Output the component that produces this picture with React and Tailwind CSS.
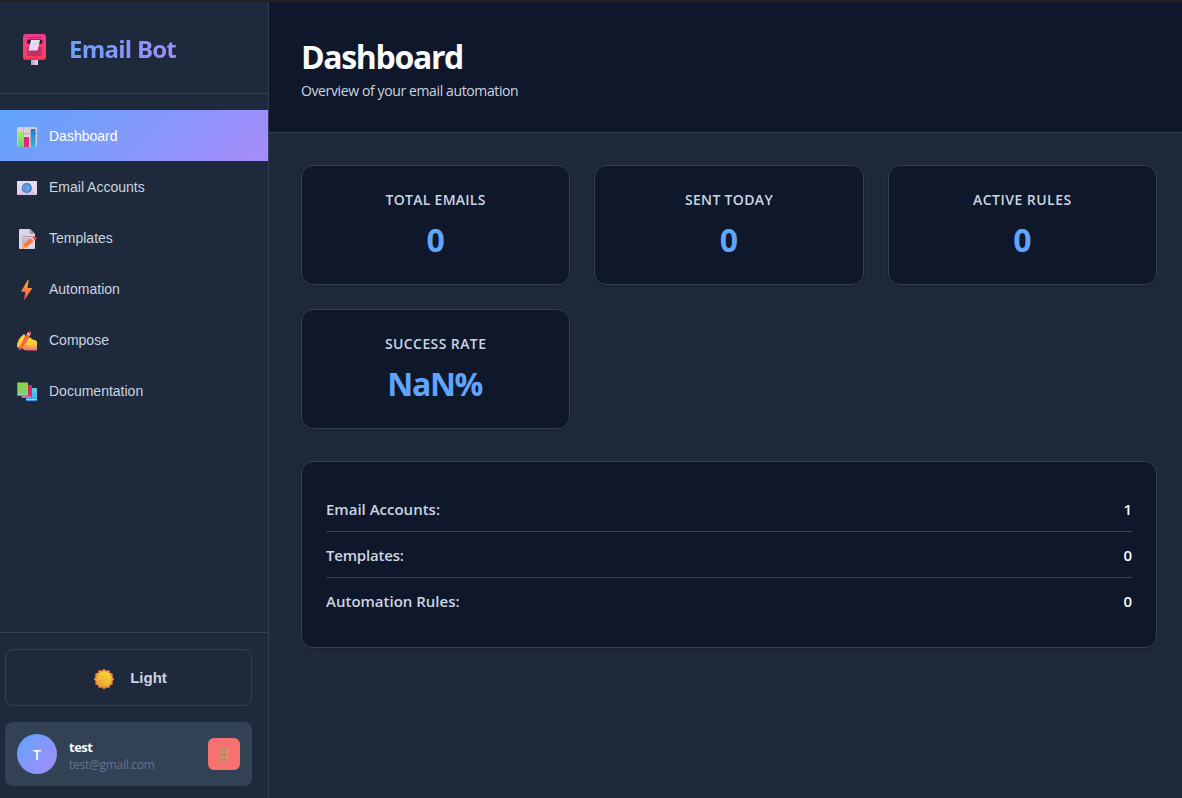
import React from 'react';

const stroke = 'border-[#334155]';

function Postbox() {
  return (
    <svg width="32" height="32" viewBox="0 0 32 32">
      <defs>
        <linearGradient id="pb" x1="0" y1="0" x2="0" y2="1">
          <stop offset="0" stopColor="#ee3d8f" />
          <stop offset="1" stopColor="#fd3f54" />
        </linearGradient>
        <linearGradient id="pbLeg" x1="0" x2="1">
          <stop offset="0" stopColor="#b79fc4" />
          <stop offset="1" stopColor="#e0d8ea" />
        </linearGradient>
      </defs>
      <rect x="12" y="25" width="7" height="7" fill="url(#pbLeg)" />
      <rect x="4" y="1" width="23" height="26" rx="3" fill="url(#pb)" />
      <rect x="5" y="25" width="21" height="2" rx="1" fill="#e93257" />
      <rect x="8" y="4" width="15" height="1" rx=".5" fill="#bd2b6d" />
      <rect x="8" y="14" width="14.500" height="9" rx="1" fill="#bf2f68" />
      <rect x="8" y="6.500" width="15.500" height="4.500" rx="2.200" fill="#36173d" />
      <path d="M12 7h9l-2.500 10.500H9.500Z" fill="#e7dfed" />
      <path d="m14 10 2 3-3 2M17 9l-1 4" stroke="#cfc4da" fill="none" strokeWidth=".8" />
    </svg>
  );
}

function Chart() {
  return (
    <svg width="20" height="20" viewBox="0 0 20 20">
      <defs>
        <linearGradient id="cg" x1="0" y1="0" x2="0" y2="1"><stop stopColor="#b0ec55" /><stop offset="1" stopColor="#62cc90" /></linearGradient>
        <linearGradient id="cb" x1="0" y1="0" x2="0" y2="1"><stop stopColor="#1f78ca" /><stop offset="1" stopColor="#34b3ee" /></linearGradient>
      </defs>
      <rect width="20" height="20" rx="2" fill="#d8cede" />
      <path d="M0 6.500h20M0 13h20M6.500 0v20M13.500 0v20" stroke="#b5abbd" strokeWidth=".8" />
      <rect x="1" y="4.500" width="5" height="15.500" rx=".7" fill="url(#cg)" />
      <rect x="7" y="10" width="5" height="10" rx=".7" fill="#df2b70" />
      <rect x="14" y="2" width="4.500" height="18" rx=".7" fill="url(#cb)" />
    </svg>
  );
}

function Mail() {
  return (
    <svg width="20" height="20" viewBox="0 0 20 20">
      <rect y="3" width="20" height="14" rx=".7" fill="#e4d9ec" />
      <path d="M0 17 7 9h6l7 8Z" fill="#d4c1e0" />
      <path d="m0 3.500 10 8 10-8" fill="none" stroke="#f4eff8" strokeWidth=".8" />
      <circle cx="9.800" cy="10" r="5.100" fill="#377bce" />
      <circle cx="9.700" cy="10" r="1.500" fill="none" stroke="#b9d1f2" strokeWidth=".8" />
      <path d="M11.300 8.500v2.200c0 1.500 2 1 1.700-1-.3-2.100-1.800-3-3.500-2.900-4 .3-4 6.200-.2 6.500 1 .1 1.800-.2 2.500-.6" fill="none" stroke="#a9c8f0" strokeWidth=".7" />
    </svg>
  );
}

function Memo() {
  return (
    <svg width="20" height="20" viewBox="0 0 20 20">
      <path d="M2 1q0-1 1-1h10l5 5v14q0 1-1 1H3q-1 0-1-1Z" fill="#dcd4e2" />
      <path d="M12.500 0v4q0 1 1 1H18Z" fill="#a79caf" />
      <path d="M5 7.500h10M5 9.800h9M5 12h7M5 14.300h5" stroke="#9e94aa" strokeWidth=".9" />
      <path d="m5 19.800 1.200-4.300 8.300-7 3 3.100-8.500 7.200Z" fill="#fa7833" />
      <path d="m5 19.800 1.200-4.300L9 18.800Z" fill="#ffab67" />
      <path d="m13.700 9.200 1-.9 3 3.100-1 .9Z" fill="#e5dceb" />
      <path d="m15 8.100 1.200-.8c1.500-.7 3.900 1.300 3.200 2.600l-1.400 1.400Z" fill="#f14a4c" />
    </svg>
  );
}

function Bolt() {
  return (
    <svg width="20" height="20" viewBox="0 0 20 20">
      <defs><linearGradient id="bo" x1="0" y1="0" x2="0" y2="1"><stop stopColor="#ffb443" /><stop offset=".5" stopColor="#fb843c" /><stop offset="1" stopColor="#ee3e57" /></linearGradient></defs>
      <path d="M10.800 0 4.300 11q-.3.700.4.700h3.600L7 19.500q0 .8.600.2L15.200 8.600q.2-.7-.5-.7h-4.200L11.600.6Q11.700-.3 10.800 0Z" fill="url(#bo)" />
    </svg>
  );
}

function Writing() {
  return (
    <svg width="20" height="20" viewBox="0 0 20 20">
      <defs><linearGradient id="wh" x1="0" y1="0" x2="0" y2="1"><stop stopColor="#ffd83d" /><stop offset=".65" stopColor="#fbc53e" /><stop offset="1" stopColor="#ec6589" /></linearGradient></defs>
      <path d="M1 11c0-2 3-5.500 5.200-7.200C8 2.700 9 5 7.700 6.600L6.500 9l6-2.400c1.600-.5 2.200.5 1.600 1.200 2.400 1 4 1.800 5.900 2.200v9.500H9.500c-2 0-3.500-.6-3.300-1.900L1 17c-1.500-1-1.300-4 0-6Z" fill="url(#wh)" />
      <path d="m6 12 5-1.500M6 15l5-.5" stroke="#f08b3f" strokeWidth=".9" />
      <path d="m1.800 19.600.6-3.700L10.400 2l3 1.700-8 13.800Z" fill="#fa663c" />
      <path d="m1.800 19.600.6-3.700 3 1.600Z" fill="#c94b48" />
      <path d="m9.800 3 .9-1.400 3 1.700-.9 1.400Z" fill="#dbcbe3" />
      <path d="m10.700 1.600.7-1c.6-1 3.300.4 2.800 1.600l-.5 1.100Z" fill="#ee3e4d" />
    </svg>
  );
}

function Books() {
  return (
    <svg width="20" height="20" viewBox="0 0 20 20">
      <defs>
        <linearGradient id="bg1" x1="0" y1="0" x2="0" y2="1"><stop stopColor="#93d53d" /><stop offset="1" stopColor="#73d084" /></linearGradient>
        <linearGradient id="bb" x1="0" y1="0" x2="0" y2="1"><stop stopColor="#55d3ec" /><stop offset="1" stopColor="#35a4f5" /></linearGradient>
      </defs>
      <rect x="9" y="6" width="11" height="13" rx=".8" fill="url(#bb)" />
      <path d="M9.500 17.300H20v1H9.500Z" fill="#c9def5" />
      <path d="M9 18.800h11" stroke="#376ac9" strokeWidth=".8" />
      <rect x="4" y="3" width="11" height="13" rx=".8" fill="#dd2867" />
      <path d="M5 14.900h9" stroke="#d8bfe3" strokeWidth=".9" />
      <rect y=".5" width="11" height="13.500" rx=".8" fill="url(#bg1)" />
      <path d="M.5 12.800H11" stroke="#aee5bd" strokeWidth=".7" />
      <path d="M.5 1v12.500H11" fill="none" stroke="#419958" strokeWidth=".7" />
    </svg>
  );
}

function Sun() {
  return (
    <svg width="20" height="20" viewBox="0 0 20 20">
      <defs><linearGradient id="su" x1=".8" y1="0" x2=".2" y2="1"><stop stopColor="#ffd735" /><stop offset="1" stopColor="#e3a136" /></linearGradient></defs>
      <g fill="#f4863b">
        <circle cx="10" cy="10" r="8.700" />
        {[0, 30, 60, 90, 120, 150, 180, 210, 240, 270, 300, 330].map((a) => (
          <circle key={a} cx="10" cy="1.800" r="1.800" transform={`rotate(${a} 10 10)`} />
        ))}
      </g>
      <circle cx="10" cy="10" r="7.700" fill="url(#su)" />
    </svg>
  );
}

function Door() {
  return (
    <svg width="14" height="14" viewBox="0 0 14 14">
      <rect x="3" y="1" width="8" height="13" fill="#c58e5c" />
      <rect x="4" y="1" width="6" height="12" fill="#cf8763" />
      <path d="M4 6.500h6M4 10.500h6" stroke="#e2934f" strokeWidth="1" />
      <path d="M4 7.500h5" stroke="#bd7650" strokeWidth="1" />
      <path d="M10.500 1v12" stroke="#e39a58" strokeWidth="1" />
    </svg>
  );
}

const nav = [
  ['Dashboard', Chart],
  ['Email Accounts', Mail],
  ['Templates', Memo],
  ['Automation', Bolt],
  ['Compose', Writing],
  ['Documentation', Books],
];

const stats = [
  ['TOTAL EMAILS', '0', 'tracking-[0.27px]'],
  ['SENT TODAY', '0', 'tracking-[0.33px]'],
  ['ACTIVE RULES', '0', 'tracking-[0.47px]'],
  ['SUCCESS RATE', 'NaN%', 'tracking-[0.4px]'],
];

const rows = [
  ['Email Accounts:', '1', 'tracking-normal'],
  ['Templates:', '0', 'tracking-[-0.2px]'],
  ['Automation Rules:', '0', 'tracking-normal'],
];

export default function App() {
  return (
    <div className="flex h-[798px] w-[1182px] overflow-hidden border-t-2 border-[#231f20] bg-[#1e293b] font-['Open_Sans','Noto_Sans',sans-serif] text-[#cbd5e1]">
      <aside className={`flex w-[269px] shrink-0 flex-col border-r ${stroke}`}>
        <div className={`flex h-[92px] shrink-0 items-center gap-[15px] border-b pt-[2px] pl-[19px] ${stroke}`}>
          <Postbox />
          <span className="bg-[linear-gradient(135deg,#60a5fa,#a78bfa)] bg-clip-text pl-[3px] text-[24px] leading-9 font-bold tracking-[-0.75px] text-transparent">Email Bot</span>
        </div>
        <nav className="flex flex-1 flex-col pt-4 font-['Liberation_Sans',Arial,sans-serif] text-[14px]">
          {nav.map(([label, Icon], i) => (
            <a key={label} className={`flex h-[51px] items-center gap-3 pl-[17px] ${i === 0 ? 'bg-[linear-gradient(135deg,#60a5fa,#a78bfa)] text-white' : ''}`}>
              <span className="pt-[3px]"><Icon /></span>
              <span className="pt-[2px]">{label}</span>
            </a>
          ))}
        </nav>
        <div className={`flex h-[166px] shrink-0 flex-col gap-4 border-t pt-4 pr-4 pl-[5px] ${stroke}`}>
          <button className={`flex h-[57px] w-full shrink-0 items-center justify-center gap-4 rounded-lg border pl-1 font-['Liberation_Sans',Arial,sans-serif] text-[15px] font-bold ${stroke}`}>
            <span className="pt-[3px]"><Sun /></span>
            <span className="pt-[2px]">Light</span>
          </button>
          <div className="flex h-16 shrink-0 items-center rounded-lg bg-[#334155] px-3">
            <div className="flex size-10 items-center justify-center rounded-full bg-[linear-gradient(135deg,#60a5fa,#a78bfa)] text-[14px] font-semibold text-white">T</div>
            <div className="ml-3 flex-1 pt-[3px]">
              <div className="text-[13px] leading-[18px] font-bold tracking-[-0.5px] text-[#f8fafc]">test</div>
              <div className="text-[12px] leading-[18px] tracking-[-0.27px] text-[#64748b]">test@gmail.com</div>
            </div>
            <button className="flex size-8 items-center justify-center rounded-md bg-[#f87171]"><Door /></button>
          </div>
        </div>
      </aside>

      <main className="flex flex-1 flex-col">
        <header className={`h-[131px] shrink-0 border-b bg-[#0f172a] px-8 pt-[31px] ${stroke}`}>
          <h1 className="text-[32px] leading-[48px] font-bold tracking-[-1.35px] text-[#f8fafc]">Dashboard</h1>
          <p className="pt-[1px] text-[14px] leading-[18px] tracking-[-0.38px]">Overview of your email automation</p>
        </header>
        <div className="pt-8 pr-[25px] pl-8">
          <div className="grid grid-cols-3 gap-6">
            {stats.map(([label, value, track]) => (
              <div key={label} className={`h-[120px] rounded-xl border bg-[#0f172a] pt-6 text-center shadow-[0_1px_3px_rgba(0,0,0,0.2)] ${stroke}`}>
                <div className={`text-[14px] leading-5 font-semibold ${track}`}>{label}</div>
                <div className={`pt-[6px] text-[32px] leading-[48px] font-bold text-[#60a5fa] ${value === 'NaN%' ? 'pr-[2px] tracking-[-1.4px]' : ''}`}>{value}</div>
              </div>
            ))}
          </div>
          <div className={`mt-8 h-[187px] rounded-xl border bg-[#0f172a] px-6 pt-6 shadow-[0_1px_3px_rgba(0,0,0,0.2)] ${stroke}`}>
            {rows.map(([label, value, track], i) => (
              <div key={label} className={`flex items-center justify-between pt-[2px] text-[15px] font-semibold ${i < 2 ? 'h-[46px] border-b' : 'h-[45px]'} ${stroke}`}>
                <span className={track}>{label}</span>
                <span className="text-[#f8fafc]">{value}</span>
              </div>
            ))}
          </div>
        </div>
      </main>
    </div>
  );
}
